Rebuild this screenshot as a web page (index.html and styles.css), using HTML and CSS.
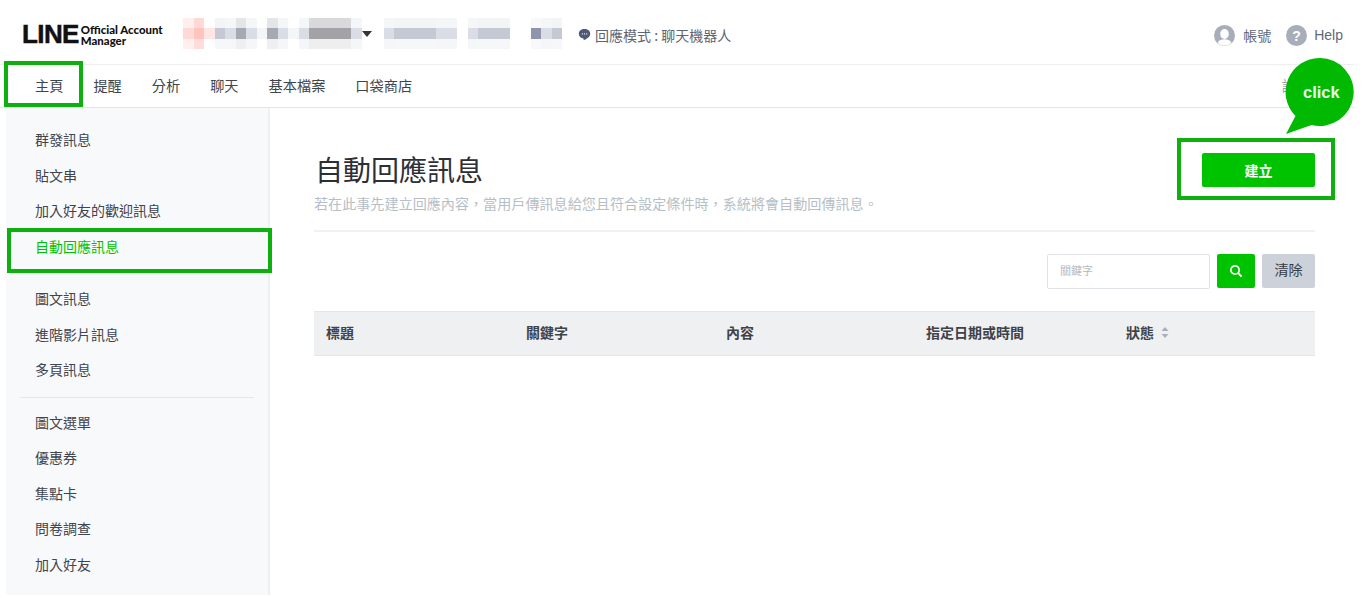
FILE: index.html
```html
<!DOCTYPE html>
<html lang="zh-Hant">
<head>
<meta charset="utf-8">
<title>LINE Official Account Manager</title>
<link rel="stylesheet" href="styles.css">
</head>
<body>
<div class="page">
  <header class="topbar">
    <div class="logo">
      <span class="logo-line">LINE</span>
      <span class="logo-sub">Official Account<br>Manager</span>
    </div>
    <div class="mosaic m1">
      <i class="c pk2"></i><i class="c pk1"></i><i class="c pk3"></i><i class="c g2"></i><i class="c g1"></i><i class="c g3"></i><i class="c g1"></i><i class="c w"></i><i class="c g3"></i><i class="c g1"></i><i class="c w"></i><i class="c g1"></i><i class="c g4"></i><i class="c g4"></i><i class="c g4"></i><i class="c g4"></i><i class="c g1"></i>
    </div>
    <svg class="caret" width="10" height="6" viewBox="0 0 10 6"><path d="M0 0h10L5 6z" fill="#333"/></svg>
    <div class="mosaic m2">
      <i class="c g1"></i><i class="c g2"></i><i class="c g2"></i><i class="c g2"></i><i class="c g2"></i><i class="c g1"></i><i class="c g1"></i><i class="c gap"></i><i class="c g1"></i><i class="c g2"></i><i class="c g2"></i><i class="c g2"></i><i class="c gap2"></i><i class="c g5"></i><i class="c g1"></i><i class="c g2"></i>
    </div>
    <div class="mode">
      <svg width="13" height="13" viewBox="0 0 13 13"><path d="M6.5 1C3.2 1 .8 3 .8 5.8c0 2.5 2 4.5 4.700 4.800l.2 1.700c2.800-1 6.500-3.300 6.500-6.500C12.200 3 9.800 1 6.500 1z" fill="#4e5a75"/><circle cx="4.300" cy="5.900" r=".6" fill="#fff"/><circle cx="6.500" cy="5.900" r=".6" fill="#fff"/><circle cx="8.700" cy="5.900" r=".6" fill="#fff"/></svg>
      <span>回應模式 : 聊天機器人</span>
    </div>
    <div class="account">
      <svg width="21" height="21" viewBox="0 0 21 21"><circle cx="10.500" cy="10.500" r="10.500" fill="#a7aeb9"/><ellipse cx="10.500" cy="9" rx="4.300" ry="5" fill="#fff"/><path d="M3.500 18c1.500-3 4-3.700 7-3.700s5.500.7 7 3.700a10.500 10.500 0 0 1-14 0z" fill="#fff"/></svg>
      <span class="acct-name">帳號</span>
      <svg class="help-icon" width="21" height="21" viewBox="0 0 21 21"><circle cx="10.500" cy="10.500" r="10.500" fill="#a7aeb9"/><text x="10.500" y="15.500" class="help-q">?</text></svg>
      <span class="help">Help</span>
    </div>
  </header>
  <nav class="tabs">
    <a>主頁</a><a>提醒</a><a>分析</a><a>聊天</a><a>基本檔案</a><a>口袋商店</a><a class="tab-end">設</a>
  </nav>
  <div class="body">
    <aside class="side">
      <ul class="group">
        <li>群發訊息</li><li>貼文串</li><li>加入好友的歡迎訊息</li><li class="active">自動回應訊息</li>
      </ul>
      <ul class="group second">
        <li>圖文訊息</li><li>進階影片訊息</li><li>多頁訊息</li>
      </ul>
      <hr class="side-rule">
      <ul class="group">
        <li>圖文選單</li><li>優惠券</li><li>集點卡</li><li>問卷調查</li><li>加入好友</li>
      </ul>
    </aside>
    <main class="main">
      <div class="head">
        <div>
          <h1>自動回應訊息</h1>
          <p>若在此事先建立回應內容，當用戶傳訊息給您且符合設定條件時，系統將會自動回傳訊息。</p>
        </div>
        <button class="create">建立</button>
      </div>
      <div class="search">
        <div class="input">關鍵字</div>
        <button class="go"><svg width="14" height="14" viewBox="0 0 14 14"><circle cx="6" cy="6" r="4.200" fill="none" stroke="#fff" stroke-width="1.700"/><path d="M9.200 9.200l3.400 3.400" stroke="#fff" stroke-width="1.900"/></svg></button>
        <button class="clear">清除</button>
      </div>
      <div class="thead">
        <div>標題</div><div>關鍵字</div><div>內容</div><div>指定日期或時間</div>
        <div class="sort">狀態
          <svg width="8" height="11" viewBox="0 0 8 11"><path d="M4 0l3.500 4h-7zM4 11L.5 7h7z" fill="#a9afb8"/></svg>
        </div>
      </div>
    </main>
  </div>
  <div class="frame f-nav"></div>
  <div class="frame f-side"></div>
  <div class="frame f-btn"></div>
  <svg class="bubble" width="70" height="78" viewBox="0 0 70 78"><path d="M35 0a34 34 0 1 1-8.500 67L1 76 10.500 58A34 34 0 0 1 35 0z" fill="#00b900"/></svg>
  <span class="bubble-text">click</span>
</div>
</body>
</html>
```
FILE: styles.css
```css
* { box-sizing: border-box; }
html, body { margin: 0; padding: 0; background: #fff; }
body {
  font-family: "Noto Sans CJK TC", "Liberation Sans", sans-serif;
  color: #3b3f47;
  overflow: hidden;
}
.page { position: relative; width: 1368px; height: 598px; overflow: hidden; }

.topbar {
  height: 65px;
  margin-right: 14px;
  display: flex;
  align-items: center;
  padding-left: 22px;
  padding-right: 11px;
  border-bottom: 1px solid #eceef0;
  padding-top: 5px;
}
.logo { display: flex; align-items: center; width: 161px; color: #111; flex: none; }
.logo-line {
  font-family: "Liberation Sans", sans-serif;
  font-weight: 700;
  font-size: 26px;
  line-height: 25px;
  letter-spacing: -.6px;
  -webkit-text-stroke: .5px #111;
}
.logo-sub {
  font-family: "Lato", sans-serif;
  font-weight: 900;
  font-size: 11.400px;
  line-height: 11px;
  margin-left: 2px;
  white-space: nowrap;
}
.mosaic { display: flex; filter: blur(.5px); height: 11px; margin-top: -2px; flex: none; }
.c { display: block; width: 10.500px; height: 11px; flex: none; }
.m2 { margin-left: 12px; }
.pk1 { background: #ffc4c0; box-shadow: 0 -10px 0 #ffd9d6, 0 10px 0 #ffdcd9; }
.pk2 { background: #ffd9d6; box-shadow: 0 -10px 0 #fff0ee, 0 10px 0 #fff0ee; }
.pk3 { background: #ffe6e4; }
.g1 { background: #dadde5; box-shadow: 0 -10px 0 #f5f6f8, 0 10px 0 #f5f6f8; }
.g2 { background: #c5c9d4; box-shadow: 0 -10px 0 #f3f4f6, 0 10px 0 #f6f7f8; }
.g3 { background: #a6a9b2; box-shadow: 0 -10px 0 #e4e5e8, 0 10px 0 #eeeff1; }
.g4 { background: #a3a3a7; box-shadow: 0 -10px 0 #d9d9dc, 0 10px 0 #eeeeef; }
.g5 { background: #8f95ad; box-shadow: 0 -10px 0 #f9f9fa, 0 10px 0 #f9f9fa; }
.w { background: #f4f5f7; }
.gap { background: #fff; }
.c.gap2 { background: #fff; width: 21px; }
.caret { margin: -2px 0 0 0; flex: none; }
.mode {
  display: flex;
  align-items: center;
  gap: 4px;
  margin-left: 16px;
  font-size: 14px;
  color: #5d6475;
  white-space: nowrap;
}
.account {
  margin-left: auto;
  display: flex;
  align-items: center;
  font-size: 14px;
  color: #626879;
  margin-top: 1px;
}
.acct-name { margin-left: 8px; }
.help-icon { margin-left: 15px; }
.help { font-family: "Liberation Sans", sans-serif; margin-left: 7px; }
.help-q { fill: #fff; font: 700 14px "Liberation Sans", sans-serif; text-anchor: middle; }

.tabs {
  height: 43px;
  display: flex;
  align-items: center;
  gap: 30px;
  padding-left: 35px;
  padding-bottom: 2px;
  margin-right: 14px;
  border-bottom: 1px solid #e3e5e9;
  font-size: 14.200px;
  line-height: 20px;
  color: #40444d;
}
.tab-end { margin-left: auto; margin-right: 58px; color: #9a9ea6; }

.body { display: flex; height: 487px; }
.side {
  width: 264px;
  margin-left: 6px;
  padding-top: 14px;
  background: #f8f9fb;
  border-right: 2px solid #eff0f3;
  font-size: 14px;
  color: #40444d;
}
.group { list-style: none; margin: 0; padding: 0 0 0 29px; }
.group li { height: 35.500px; line-height: 35.500px; white-space: nowrap; }
.group .active { color: #00c300; }
.second { margin-top: 17px; }
.side-rule { border: 0; border-top: 1px solid #e6e7ea; margin: 9px 14px 7px 14px; }

.main { width: 1001px; margin-left: 44px; }
.head {
  height: 124px;
  display: flex;
  justify-content: space-between;
  border-bottom: 2px solid #f1f2f4;
  padding-top: 44px;
}
h1 {
  margin: 0;
  font-size: 28px;
  font-weight: 400;
  line-height: 34px;
  color: #2c2f36;
  padding-left: 1px;
}
.head p { margin: 8px 0 0; font-size: 14.100px; line-height: 18px; color: #b6bec6; white-space: nowrap; }
.create {
  width: 113px;
  height: 34px;
  margin-top: 1px;
  border: 0;
  border-radius: 2px;
  background: #00c300;
  color: #fff;
  font: 700 14px "Noto Sans CJK TC", sans-serif;
}
.search {
  display: flex;
  justify-content: flex-end;
  gap: 7px;
  margin-top: 22px;
}
.input {
  width: 163px;
  height: 35px;
  border: 1px solid #dfe2e6;
  border-radius: 2px;
  padding-left: 12px;
  font-size: 11px;
  line-height: 31px;
  color: #b4bac2;
}
.go, .clear { height: 34px; border: 0; border-radius: 2px; padding: 0; }
.go { width: 38px; background: #00c300; display: flex; align-items: center; justify-content: center; }
.clear { width: 53px; background: #cdd2da; color: #363a42; padding-bottom: 4px; font: 400 14px "Noto Sans CJK TC", sans-serif; }
.thead {
  margin-top: 22px;
  height: 45px;
  display: grid;
  grid-template-columns: repeat(5, 200px);
  align-items: center;
  padding-left: 12px;
  padding-bottom: 3px;
  background: #eef0f2;
  border-top: 1px solid #e4e6e9;
  border-bottom: 1px solid #e4e6e9;
  font-size: 14px;
  font-weight: 700;
  color: #3e4249;
}
.sort { display: flex; align-items: center; gap: 7px; }

.frame { position: absolute; border: 4px solid #0db00f; }
.f-nav { left: 4px; top: 61px; width: 79px; height: 46px; }
.f-side { left: 7px; top: 228px; width: 265px; height: 45px; }
.f-btn { left: 1177px; top: 138px; width: 158px; height: 62px; }
.bubble { position: absolute; left: 1285px; top: 58px; }
.bubble-text {
  position: absolute;
  left: 1303px;
  top: 82px;
  font: 700 16.500px/20px "Liberation Sans", sans-serif;
  color: #e9f9e9;
}
```
